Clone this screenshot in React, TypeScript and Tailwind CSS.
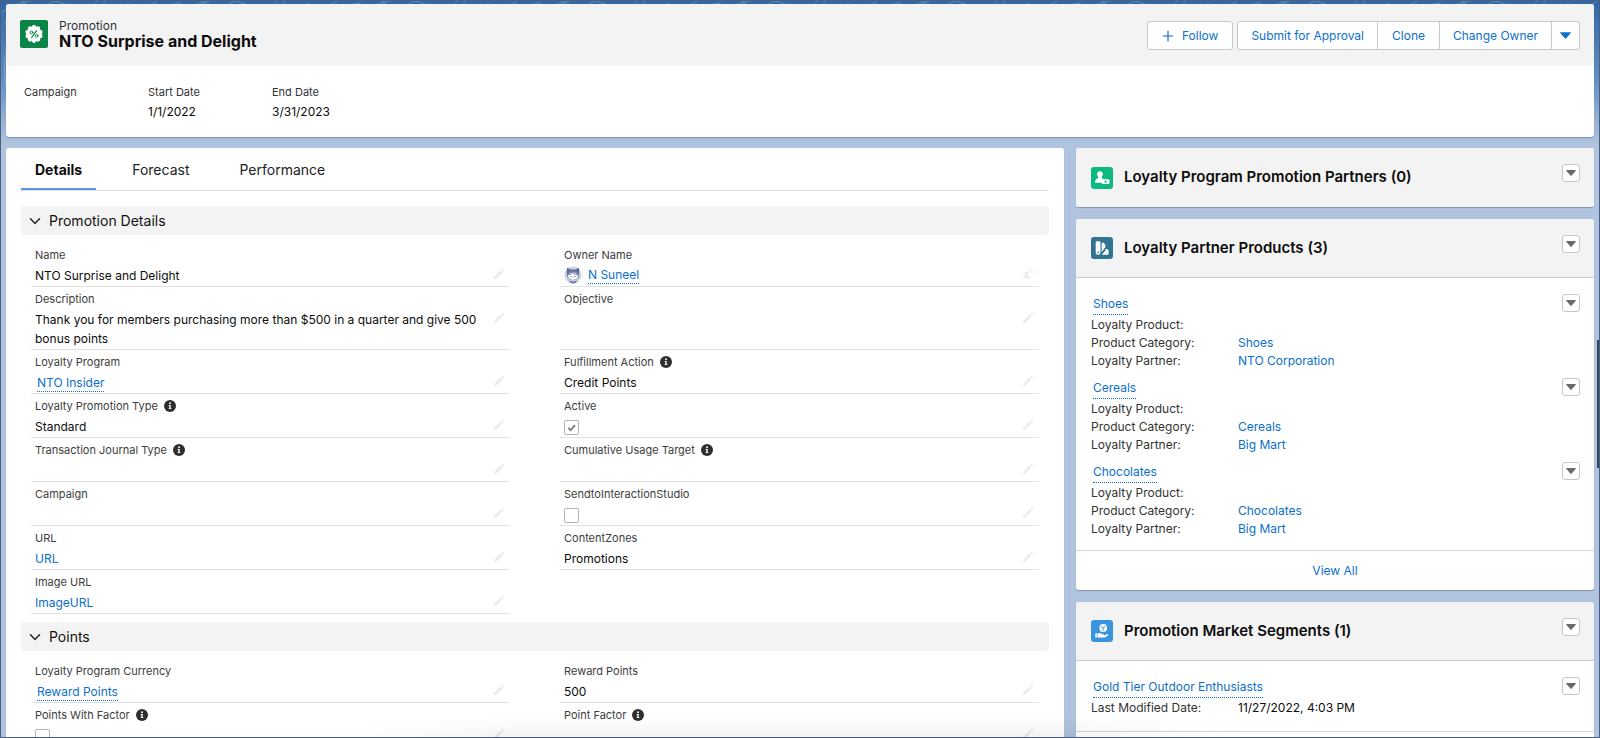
import React, { useId, useState } from "react";

type IconProps = { className?: string };

function PromotionIcon() {
  const bumps = Array.from({ length: 10 }, (_, i) => {
    const a = (i * Math.PI * 2) / 10;
    return <circle key={i} cx={14 + 6.6 * Math.sin(a)} cy={14 - 6.6 * Math.cos(a)} r="2.3" />;
  });
  return (
    <span className="flex size-7 shrink-0 items-center justify-center rounded-xs bg-[#0a8447]">
      <svg viewBox="0 0 28 28" className="size-7" aria-hidden="true">
        <g fill="#fff">
          <circle cx="14" cy="14" r="7.2" />
          {bumps}
        </g>
        <g fill="none" stroke="#0a8447" strokeLinecap="round">
          <path d="M16.6 10.6 11.6 17.6" strokeWidth="1.1" />
          <circle cx="11.5" cy="12.4" r="1.4" strokeWidth="1" />
          <circle cx="16.6" cy="15.8" r="1.4" strokeWidth="1" />
        </g>
      </svg>
    </span>
  );
}

function PartnerIcon() {
  return (
    <span className="size-[22px] shrink-0 rounded-[3px] bg-[#0cb981]">
      <svg viewBox="0 0 22 22" className="size-[22px]" aria-hidden="true">
        <path
          fill="#fff"
          d="M9 4.2c1.7 0 2.9 1.2 2.9 2.9 0 1.1-.5 2-1.1 2.6-.3.3-.3.9.1 1.1l1.3.6c-.8.2-1.3.7-1.3 1.5v2.9H5c-.6 0-1-.4-1-1 0-2 1.7-2.9 3.1-3.9.4-.3.4-.9.1-1.2-.7-.6-1.100-1.500-1.100-2.600C6.100 5.400 7.300 4.200 9 4.200z"
        />
        <rect x="10.6" y="12.2" width="7.900" height="4.700" rx=".8" fill="#fff" />
        <circle cx="14.600" cy="14.550" r="1.100" fill="#0cb981" />
      </svg>
    </span>
  );
}

function ProductsIcon() {
  return (
    <span className="size-[22px] shrink-0 rounded-[3px] bg-[#2f7591]">
      <svg viewBox="0 0 22 22" className="size-[22px]" aria-hidden="true">
        <g fill="#fff">
          <path d="M5.600 4.300h3a.9.9 0 0 1 .9.900v10.200a2.400 2.400 0 0 1-4.800 0V5.200a.9.900 0 0 1 .9-.900z" />
          <path d="M10.700 6.200 12.200 5.600a.8.800 0 0 1 1 .4l1.300 2.900a.9.900 0 0 1 0 .800l-3.800 5.600z" />
          <path d="M15.300 11.600l2 1.500a.9.900 0 0 1 .3.700v3a.9.900 0 0 1-.9.900h-6c2-1.600 3.300-3.600 4.600-6.100z" />
        </g>
        <circle cx="7.100" cy="15.300" r=".9" fill="#2f7591" />
      </svg>
    </span>
  );
}

function SegmentsIcon() {
  return (
    <span className="size-[22px] shrink-0 rounded-[3px] bg-[#3a94dd]">
      <svg viewBox="0 0 22 22" className="size-[22px]" aria-hidden="true">
        <g fill="#fff">
          <circle cx="12.200" cy="8" r="3.900" />
          <path d="M4.300 13.200h1.600v4.300H4.300z" />
          <path d="M6.500 13.300h2.700c.8 0 1.300.7 2 1h1.500c.8 0 .8 1.100 0 1.100h-1.800c1.700.4 3.400 0 4.800-1.100.8-.6 1.900.1 1.300.9-1.300 1.600-3 2.400-4.800 2.400H6.500z" />
        </g>
        <g stroke="#3a94dd" strokeWidth=".9" fill="none">
          <path d="M9.700 6.400 12.200 7.900l2.500-1.500M12.200 7.900v3" />
        </g>
      </svg>
    </span>
  );
}

function Caret({ className }: IconProps) {
  return (
    <svg viewBox="0 0 10 6" className={className} aria-hidden="true">
      <path d="M.8 0h8.400c.6 0 .8.500.400.900L5.600 5.600c-.3.400-.9.400-1.200 0L.4.900C0 .5.200 0 .8 0z" fill="currentColor" />
    </svg>
  );
}

function Pencil() {
  return (
    <svg viewBox="0 0 12 12" className="size-3" aria-hidden="true">
      <path d="M1.500 8.600 7.800 2.300l1.900 1.900-6.300 6.300-2.600.7zM8.400 1.700l.8-.8c.3-.3.700-.3 1 0l.9.9c.3.300.3.700 0 1l-.8.800z" fill="currentColor" />
    </svg>
  );
}

function ChangeOwnerIcon() {
  return (
    <svg viewBox="0 0 12 12" className="size-3" aria-hidden="true">
      <path d="M4.500 3.200a2 2 0 0 1 1.100 3.700c0 .9 2.700 1.200 2.700 3.100v.6H1V10c0-1.900 2.500-2.200 2.500-3.100A2 2 0 0 1 4.500 3.200z" fill="currentColor" />
      <path d="M7.500 2.200h2.200a1 1 0 0 1 1 1v2.300M8.600.8 7.200 2.200l1.400 1.400" fill="none" stroke="currentColor" />
    </svg>
  );
}

function Info({ about }: { about: string }) {
  return (
    <button type="button" aria-label={`Help ${about}`} className="size-3">
      <svg viewBox="0 0 12 12" className="size-3" aria-hidden="true">
        <circle cx="6" cy="6" r="6" fill="#2e2e2e" />
        <circle cx="6" cy="3.300" r=".95" fill="#fff" />
        <path d="M4.700 5h2v3.200h.7v.9H4.600v-.9h.7V5.900h-.6z" fill="#fff" />
      </svg>
    </button>
  );
}

function Avatar() {
  return (
    <svg viewBox="0 0 18 18" className="size-[18px]" aria-hidden="true">
      <circle cx="9" cy="9" r="8.500" fill="#c9d4e6" />
      <path d="M3.200 1.600 6.300 3.500h5.400l3.100-1.900.5 5-1 4H3.700l-1-4z" fill="#5c6c8f" />
      <ellipse cx="9" cy="9.300" rx="6" ry="4.900" fill="#6d7fa6" />
      <ellipse cx="9" cy="10.200" rx="4.800" ry="3.700" fill="#fff" />
      <path d="M5 8.600c1.500-.4 2.500-1.200 3-2.200 1.200 1.400 3 2 5 2.200" fill="none" stroke="#6d7fa6" />
      <circle cx="7" cy="10.500" r=".6" fill="#3d4b6c" />
      <circle cx="11" cy="10.500" r=".6" fill="#3d4b6c" />
      <path d="M5 14.500c2 1 6 1 8 0l-1 2.200c-1.800 1-4.200 1-6 0z" fill="#7585a8" />
    </svg>
  );
}

function RecordLink({ children }: { children: React.ReactNode }) {
  return (
    <a href="#" className="mx-0.5 inline-block border-b border-dotted border-[#0b6fcb] leading-4 text-[#0b6fcb]">
      {children}
    </a>
  );
}

type FieldSpec = {
  label: string;
  info?: boolean;
  kind?: "text" | "record" | "url" | "check" | "owner";
  value?: string;
  checked?: boolean;
};

function Field({ label, info, kind = "text", value = "", checked = false }: FieldSpec) {
  const id = useId();
  const [on, setOn] = useState(checked);
  return (
    <div className="flex min-h-11 items-start border-b border-[#e3e3e3] pt-1 pb-px pl-1">
      <div className="min-w-0 flex-1">
        <div className="flex h-4 items-center gap-1.5 text-[11px] text-[#3c3c3c]">
          {kind === "check" ? <label htmlFor={id}>{label}</label> : <span>{label}</span>}
          {info && <Info about={label} />}
        </div>
        <div className="mt-[3px] text-xs leading-[19px] text-[#0c0c0c]">
          {kind === "text" && value}
          {kind === "record" && <RecordLink>{value}</RecordLink>}
          {kind === "url" && (
            <a href="#" className="text-[#0b6fcb]">
              {value}
            </a>
          )}
          {kind === "owner" && (
            <span className="flex items-center gap-1">
              <Avatar />
              <RecordLink>{value}</RecordLink>
            </span>
          )}
          {kind === "check" && (
            <span className="grid pt-[3px]">
              <input
                id={id}
                type="checkbox"
                checked={on}
                onChange={(e) => setOn(e.target.checked)}
                className="col-start-1 row-start-1 size-[15px] appearance-none rounded-[2px] border border-[#b4b4b4] bg-white"
              />
              {on && (
                <svg viewBox="0 0 15 15" className="pointer-events-none col-start-1 row-start-1 size-[15px]" aria-hidden="true">
                  <path d="M4.200 7.900 6.500 10.100 11 5.100" fill="none" stroke="#7d7d7d" strokeWidth="1.800" />
                </svg>
              )}
            </span>
          )}
        </div>
      </div>
      <button type="button" aria-label={`Edit ${label}`} className="mt-[19px] mr-[5px] flex h-4 w-3 shrink-0 items-center text-[#ebebeb]">
        {kind === "owner" ? <ChangeOwnerIcon /> : <Pencil />}
      </button>
    </div>
  );
}

function Section({ title, rows }: { title: string; rows: [FieldSpec, FieldSpec?][] }) {
  const [open, setOpen] = useState(true);
  return (
    <section className="mb-2">
      <h3>
        <button
          type="button"
          aria-expanded={open}
          onClick={() => setOpen(!open)}
          className="flex h-[29px] w-full items-center gap-2 rounded-[3px] bg-[#f3f3f3] px-2 text-sm text-[#111]"
        >
          <svg viewBox="0 0 12 12" className="size-3" aria-hidden="true">
            <path d="M1.500 3.800 6 8.500l4.500-4.700" fill="none" stroke="#222" strokeWidth="1.500" strokeLinecap="round" />
          </svg>
          {title}
        </button>
      </h3>
      {open && (
        <div className="grid grid-cols-2 gap-x-[50px] px-2.5 pt-2">
          {rows.map(([left, right]) => (
            <React.Fragment key={left.label}>
              <Field {...left} />
              {right ? <Field {...right} /> : <div />}
            </React.Fragment>
          ))}
        </div>
      )}
    </section>
  );
}

function MenuButton({ label }: { label: string }) {
  return (
    <button
      type="button"
      aria-label={label}
      className="flex size-[18px] shrink-0 items-center justify-center rounded-[3px] border border-[#c6c6c6] bg-white text-[#6a6a6a]"
    >
      <Caret className="h-1.5 w-2.5" />
    </button>
  );
}

const cardClass = "overflow-hidden rounded-[3px] bg-white shadow-[0_1px_1px_rgba(80,90,120,0.45)]";

function RelatedCard({ icon, title, children }: { icon: React.ReactNode; title: string; children?: React.ReactNode }) {
  return (
    <article className={cardClass}>
      <header
        className={
          children
            ? "flex h-[59px] items-start border-b border-[#cdcdcd] bg-[#f3f3f3] pr-3.5 pl-[15px]"
            : "flex h-[59px] items-start bg-[#f3f3f3] pr-3.5 pl-[15px]"
        }
      >
        <div className="flex h-full flex-1 items-center gap-[11px]">
          {icon}
          <h2 className="text-[15px] font-semibold text-[#0c0c0c]">{title}</h2>
        </div>
        <div className="pt-4">
          <MenuButton label={`Actions for ${title}`} />
        </div>
      </header>
      {children}
    </article>
  );
}

type Line = { label: string; value?: string; link?: boolean };

function RelatedItem({ name, lines }: { name: string; lines: Line[] }) {
  return (
    <li className="flex items-start">
      <div className="flex-1">
        <div className="h-[22px] pl-0.5 text-xs">
          <a href="#" className="inline-block border-b border-dotted border-[#0b6fcb] leading-5 text-[#0b6fcb]">
            {name}
          </a>
        </div>
        <dl>
          {lines.map((l) => (
            <div key={l.label} className="flex text-xs leading-[18px]">
              <dt className="w-[147px] text-[#333]">{l.label}</dt>
              <dd className="text-[#0c0c0c]">
                {l.link ? (
                  <a href="#" className="text-[#0b6fcb]">
                    {l.value}
                  </a>
                ) : (
                  l.value
                )}
              </dd>
            </div>
          ))}
        </dl>
      </div>
      <MenuButton label={`Actions for ${name}`} />
    </li>
  );
}

const products = [
  { name: "Shoes", category: "Shoes", partner: "NTO Corporation" },
  { name: "Cereals", category: "Cereals", partner: "Big Mart" },
  { name: "Chocolates", category: "Chocolates", partner: "Big Mart" },
];

const detailRows: [FieldSpec, FieldSpec?][] = [
  [
    { label: "Name", value: "NTO Surprise and Delight" },
    { label: "Owner Name", kind: "owner", value: "N Suneel" },
  ],
  [
    { label: "Description", value: "Thank you for members purchasing more than $500 in a quarter and give 500 bonus points" },
    { label: "Objective" },
  ],
  [
    { label: "Loyalty Program", kind: "record", value: "NTO Insider" },
    { label: "Fulfillment Action", info: true, value: "Credit Points" },
  ],
  [
    { label: "Loyalty Promotion Type", info: true, value: "Standard" },
    { label: "Active", kind: "check", checked: true },
  ],
  [{ label: "Transaction Journal Type", info: true }, { label: "Cumulative Usage Target", info: true }],
  [{ label: "Campaign" }, { label: "SendtoInteractionStudio", kind: "check" }],
  [
    { label: "URL", kind: "url", value: "URL" },
    { label: "ContentZones", value: "Promotions" },
  ],
  [{ label: "Image URL", kind: "url", value: "ImageURL" }],
];

const pointRows: [FieldSpec, FieldSpec?][] = [
  [
    { label: "Loyalty Program Currency", kind: "record", value: "Reward Points" },
    { label: "Reward Points", value: "500" },
  ],
  [
    { label: "Points With Factor", info: true, kind: "check" },
    { label: "Point Factor", info: true },
  ],
];

function Backdrop() {
  return (
    <svg className="absolute inset-0 h-32 w-full" aria-hidden="true">
      <defs>
        <pattern id="contours" width="180" height="120" patternUnits="userSpaceOnUse">
          <g fill="none" stroke="#fff" strokeOpacity=".22">
            <path d="M0 12C30-8 60-4 84 14M20 0c8 6 20 8 34 0M96 0l-8 14M104 0l-6 14M126 2c10 6 22 4 30-2M160 12c6-8 14-10 20-10" />
            <path d="M176 24c-12 14 10 26 2 44s-14 22 0 40M166 30c16 18 2 32 10 52M4 20c8 20-6 40 2 70" />
          </g>
        </pattern>
      </defs>
      <rect width="100%" height="100%" fill="url(#contours)" />
    </svg>
  );
}

const tabs = ["Details", "Forecast", "Performance"];

export default function App() {
  const [tab, setTab] = useState("Details");
  const action = "flex h-[29px] items-center border-[#c9c9c9] bg-white text-xs text-[#0b6fcb]";
  return (
    <div className="relative h-screen overflow-hidden border border-[#4b5f85] bg-[#b0c4df] font-[Inter,'Liberation_Sans',sans-serif]">
      <div className="absolute inset-0 h-36 bg-linear-to-b from-[#2f68a6] via-[#5d8abd] via-50% to-[#b0c4df]">
        <Backdrop />
      </div>

      <div className="relative flex flex-col gap-[11px] px-[5px] pt-[3px]">
        <header className={cardClass}>
          <div className="flex h-[62px] items-start bg-[#f3f3f3] px-3.5">
            <div className="flex flex-1 gap-[11px] pt-4">
              <PromotionIcon />
              <div className="-mt-0.5">
                <p className="text-xs leading-[15px] text-[#333]">Promotion</p>
                <h1 className="text-base leading-4 font-bold text-[#0c0c0c]">NTO Surprise and Delight</h1>
              </div>
            </div>
            <div className="flex gap-1 pt-[17px]">
              <button type="button" className={`${action} gap-2 rounded-[3px] border px-3.5`}>
                <svg viewBox="0 0 12 12" className="size-3" aria-hidden="true">
                  <path d="M6 .8v10.400M.8 6h10.400" stroke="currentColor" strokeWidth="1.200" />
                </svg>
                Follow
              </button>
              <div className="flex">
                <button type="button" className={`${action} rounded-l-[3px] border px-[13px]`}>
                  Submit for Approval
                </button>
                <button type="button" className={`${action} border-y border-r px-3.5`}>
                  Clone
                </button>
                <button type="button" className={`${action} border-y border-r px-[13px]`}>
                  Change Owner
                </button>
                <button type="button" aria-label="More actions" className={`${action} w-7 justify-center rounded-r-[3px] border-y border-r`}>
                  <Caret className="h-[7px] w-[11px]" />
                </button>
              </div>
            </div>
          </div>
          <dl className="flex h-[71px] pt-[18px] pl-[18px]">
            {[
              ["Campaign", ""],
              ["Start Date", "1/1/2022"],
              ["End Date", "3/31/2023"],
            ].map(([k, v]) => (
              <div key={k} className="w-[124px]">
                <dt className="text-[11px] leading-4 text-[#333]">{k}</dt>
                <dd className="mt-0.5 text-xs leading-5 text-[#0c0c0c]">{v}</dd>
              </div>
            ))}
          </dl>
        </header>

        <div className="grid grid-cols-[minmax(0,1fr)_minmax(0,518px)] items-start gap-3">
          <main className={`${cardClass} px-[15px]`}>
            <div role="tablist" className="mb-[15px] flex h-[43px] gap-[22px] border-b border-[#e3e3e3]">
              {tabs.map((t) => (
                <button
                  key={t}
                  type="button"
                  role="tab"
                  aria-selected={t === tab}
                  onClick={() => setTab(t)}
                  className={
                    t === tab
                      ? "border-b-2 border-[#5b93e6] px-3.5 pt-1 text-sm font-bold text-[#0c0c0c]"
                      : "border-b-2 border-transparent px-3.5 pt-1 text-sm text-[#222]"
                  }
                >
                  {t}
                </button>
              ))}
            </div>
            <Section title="Promotion Details" rows={detailRows} />
            <Section title="Points" rows={pointRows} />
          </main>

          <aside className="flex flex-col gap-3">
            <RelatedCard icon={<PartnerIcon />} title="Loyalty Program Promotion Partners (0)" />
            <RelatedCard icon={<ProductsIcon />} title="Loyalty Partner Products (3)">
              <ul className="flex flex-col gap-2 pt-4 pr-3.5 pb-3 pl-[15px]">
                {products.map((p) => (
                  <RelatedItem
                    key={p.name}
                    name={p.name}
                    lines={[
                      { label: "Loyalty Product:" },
                      { label: "Product Category:", value: p.category, link: true },
                      { label: "Loyalty Partner:", value: p.partner, link: true },
                    ]}
                  />
                ))}
              </ul>
              <footer className="border-t border-[#d4d4d4] text-center text-xs leading-[39px]">
                <a href="#" className="text-[#0b6fcb]">
                  View All
                </a>
              </footer>
            </RelatedCard>
            <RelatedCard icon={<SegmentsIcon />} title="Promotion Market Segments (1)">
              <ul className="pt-4 pr-3.5 pb-3.5 pl-[15px]">
                <RelatedItem name="Gold Tier Outdoor Enthusiasts" lines={[{ label: "Last Modified Date:", value: "11/27/2022, 4:03 PM" }]} />
              </ul>
              <footer className="h-10 border-t border-[#d4d4d4]" />
            </RelatedCard>
          </aside>
        </div>
      </div>

      <div className="pointer-events-none absolute inset-x-[22%] bottom-0 h-5 bg-linear-to-b from-transparent to-black/5 mask-x-from-80% mask-x-to-100%" />
      <div className="absolute top-[46%] right-0 h-32 w-0.5 bg-[#33475c]" />
    </div>
  );
}
